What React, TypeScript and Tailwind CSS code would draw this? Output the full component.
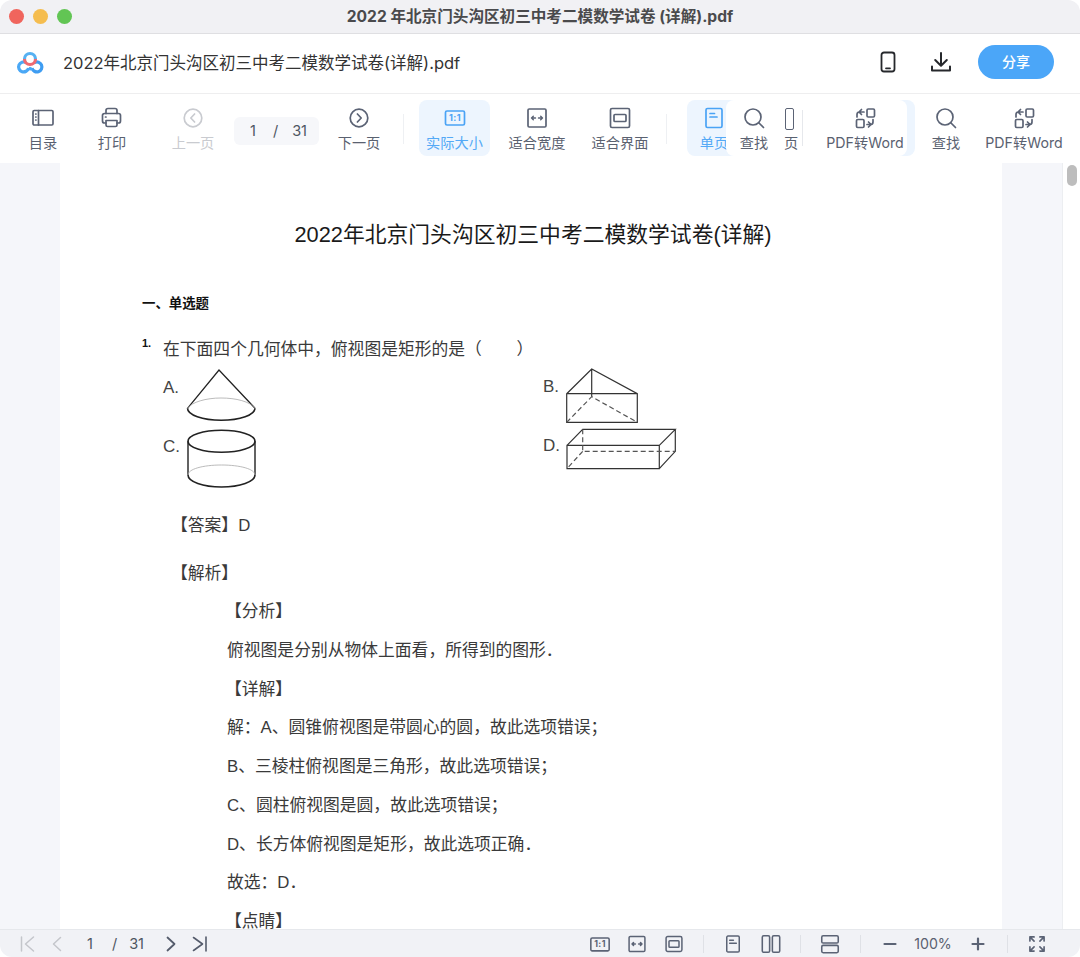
import React from "react";

const FONT = "font-['Inter','Noto_Sans_CJK_SC',sans-serif]";
const PDF = "font-['Liberation_Sans','Noto_Sans_CJK_SC',sans-serif]";

type IconProps = { c?: string };
const Svg = ({ c = "#5b6375", w = 1.7, children }: IconProps & { w?: number; children: React.ReactNode }) => (
  <svg width={24} height={24} viewBox="0 0 24 24" fill="none" stroke={c} strokeWidth={w} strokeLinecap="round" strokeLinejoin="round">
    {children}
  </svg>
);

const Toc = (p: IconProps) => (
  <Svg {...p}>
    <rect x="2" y="4.5" width="20" height="14.5" rx="1.2" />
    <path d="M7.5 4.5v14.500M4.700 8h.3M4.700 11h.3M4.700 14h.3" />
  </Svg>
);
const Printer = (p: IconProps) => (
  <Svg {...p}>
    <path d="M6 7.500V4.500a2 2 0 0 1 2-2h7a2 2 0 0 1 2 2v3" />
    <path d="M6 17H4.500A2 2 0 0 1 2.500 15V9.500a2 2 0 0 1 2-2h14a2 2 0 0 1 2 2V15a2 2 0 0 1-2 2H17" />
    <path d="M6 14.500h11V19a1.500 1.500 0 0 1-1.500 1.500h-8A1.500 1.500 0 0 1 6 19zM5.500 11h.5" />
  </Svg>
);
const CircleArrow = ({ left, ...p }: IconProps & { left?: boolean }) => (
  <Svg {...p}>
    <circle cx="12" cy="12" r="8.800" />
    <path d={left ? "M13.600 8l-3.800 4 3.800 4" : "M10.400 8l3.800 4-3.800 4"} />
  </Svg>
);
const Actual = ({ c = "#5b6375" }: IconProps) => (
  <svg width={24} height={24} viewBox="0 0 24 24" fill="none" stroke={c} strokeWidth="1.700">
    <rect x="2.500" y="5" width="19" height="14" rx="1.500" />
    <text x="12" y="15.400" textAnchor="middle" fontSize="9" fontWeight="700" letterSpacing="0.4" fill={c} stroke="none" fontFamily="Inter, sans-serif">1:1</text>
  </svg>
);
const FitWidth = (p: IconProps) => (
  <Svg {...p}>
    <rect x="3" y="3" width="18" height="18" rx="1.200" />
    <path d="M6.500 12h4M6.500 12l1.800-1.700M6.500 12l1.800 1.700M17.500 12h-4M17.500 12l-1.800-1.700M17.500 12l-1.800 1.700" strokeWidth="1.400" />
  </Svg>
);
const FitPage = (p: IconProps) => (
  <Svg {...p}>
    <rect x="2.500" y="2.500" width="19" height="19" rx="1.500" />
    <rect x="6" y="8.500" width="12" height="7" rx="1" />
  </Svg>
);
const SinglePage = (p: IconProps) => (
  <Svg {...p}>
    <rect x="4" y="2.500" width="16" height="19" rx="1.500" />
    <path d="M8 7.500h4.500M8 11h7" />
  </Svg>
);
const Search = (p: IconProps) => (
  <Svg {...p}>
    <circle cx="11" cy="11" r="8" />
    <path d="M17 17l4.500 4.500" />
  </Svg>
);
const Convert = (p: IconProps) => (
  <Svg {...p}>
    <rect x="14" y="3" width="7.500" height="8" rx="1.200" />
    <rect x="3.500" y="13.500" width="7.500" height="8" rx="1.200" />
    <path d="M11 6H6.500A2.500 2.500 0 0 0 4 8.500V11M8.500 3.500 6 6l2.500 2.500M14 18.500h3.500A2.500 2.500 0 0 0 20 16v-2.500M15.500 21l2.500-2.500-2.500-2.500" />
  </Svg>
);
const Phone = () => (
  <svg width="24" height="24" viewBox="0 0 24 24" fill="none" stroke="#26282c" strokeWidth="1.800" strokeLinecap="round">
    <rect x="5.500" y="2.500" width="13" height="19" rx="2.500" />
    <path d="M10 18.300h4" />
  </svg>
);
const Download = () => (
  <svg width="24" height="24" viewBox="0 0 24 24" fill="none" stroke="#26282c" strokeWidth="2" strokeLinecap="round" strokeLinejoin="round">
    <path d="M12 3v12.500M6.200 10l5.800 5.800 5.800-5.800M3 16.500v4h18v-4" />
  </svg>
);
const Logo = () => (
  <svg className="mb-[2px]" width="30" height="24" viewBox="0 0 30 24" fill="none" strokeWidth="3.200">
    <path d="M11 11.500a5 5 0 1 0 2.500 5.500" stroke="#4aa8f6" />
    <path d="M17 17a5 5 0 1 0 2.500-5.500" stroke="#3f9df2" />
    <path d="M13.500 17c1 1 2.500 1 3.500 0" stroke="#4aa8f6" />
    <path d="M9.500 8a5.500 5.500 0 0 1 11 0" stroke="#56b1f2" />
    <path d="M9.500 8a5.500 5.500 0 0 0 11 0" stroke="#ee6a72" />
  </svg>
);

const Tool = ({ label, icon, w, color = "text-[#5a6170]", ml = "" }: { label: string; icon: React.ReactNode; w: string; color?: string; ml?: string }) => (
  <div className={`flex h-[56px] shrink-0 flex-col items-center pt-[6px] ${w} ${ml}`}>
    <div className="flex h-[24px] items-center justify-center">{icon}</div>
    <span className="block h-[18px]">
      <span className={`whitespace-nowrap text-[14.200px] leading-[18px] ${color}`}>{label}</span>
    </span>
  </div>
);

const ToolDivider = ({ ml }: { ml: string }) => <div className={`mt-[14px] h-[30px] w-px shrink-0 bg-[#eef0f3] ${ml}`} />;

const Toolbar = () => (
  <div className="relative z-10 flex h-[69px] shrink-0 items-start bg-white pl-[8px] pt-[6px]">
    <Tool label="目录" icon={<Toc />} w="w-[70px]" />
    <Tool label="打印" icon={<Printer />} w="w-[68px]" />
    <Tool label="上一页" icon={<CircleArrow left c="#c9cbd0" />} w="w-[70px]" color="text-[#c9cbd0]" ml="ml-[12px]" />
    <div className="ml-[6px] mt-[17px] flex h-[28px] w-[85px] shrink-0 items-center rounded-md bg-[#f6f7fa] pl-[16px] text-[14.500px] text-[#4e5561]">
      <span>1</span>
      <span className="ml-[17px]">/</span>
      <span className="ml-[14px]">31</span>
    </div>
    <Tool label="下一页" icon={<CircleArrow />} w="w-[70px]" ml="ml-[5px]" />
    <ToolDivider ml="ml-[9px]" />
    <div className="ml-[15px] shrink-0 rounded-lg bg-[#edf5fe]">
      <Tool label="实际大小" icon={<Actual c="#4aa3f5" />} w="w-[71px]" color="text-[#54a9f6]" />
    </div>
    <Tool label="适合宽度" icon={<FitWidth />} w="w-[84px]" ml="ml-[5px]" />
    <Tool label="适合界面" icon={<FitPage />} w="w-[82px]" />
    <ToolDivider ml="ml-[5px]" />
    <div className="relative ml-[20px] h-[56px] w-[228px] shrink-0 rounded-lg bg-[#edf5fe]">
      <Tool label="单页" icon={<SinglePage c="#4aa3f5" />} w="w-[54px]" color="text-[#54a9f6]" />
      <div className="absolute left-[39px] top-0 flex h-[56px] w-[181px] items-center overflow-hidden rounded-lg bg-white">
        <Tool label="查找" icon={<Search />} w="w-[56px]" />
        <div className="relative h-[56px] w-[20px] shrink-0 overflow-hidden">
          <span className="absolute left-[2px] top-[34px] whitespace-nowrap text-[14.200px] leading-[18px] text-[#5a6170]">页</span>
          <div className="absolute left-[3px] top-[8px] h-[22px] w-[9px] rounded-[2px] border-[1.600px] border-[#5b6375]" />
        </div>
        <div className="h-[36px] w-px shrink-0 bg-[#e6e8ec]" />
        <Tool label="PDF转Word" icon={<Convert />} w="w-[90px]" ml="ml-[17px]" />
      </div>
    </div>
    <Tool label="查找" icon={<Search />} w="w-[60px]" ml="ml-[1px]" />
    <Tool label="PDF转Word" icon={<Convert />} w="w-[90px]" ml="ml-[3px]" />
  </div>
);

const Cone = () => (
  <svg width="72" height="56" viewBox="0 0 72 56" fill="none" stroke="#222" strokeWidth="1.300">
    <path d="M1.500 40.300 33 2 69 40.300" />
    <path d="M1.500 40.300c0 6.700 15 12 33.750 12S69 47 69 40.300" strokeWidth="1.600" />
    <path d="M1.500 40.300C6 34 20 30 35 30s29 3.500 34 10.300" stroke="#aaa" strokeWidth="0.800" />
  </svg>
);
const Cylinder = () => (
  <svg width="72" height="60" viewBox="0 0 72 60" fill="none" stroke="#222" strokeWidth="1.400">
    <ellipse cx="34.500" cy="12.300" rx="33.500" ry="11" strokeWidth="1.600" />
    <path d="M1 12.300V46M68 12.300V46" />
    <path d="M1 46c0 6.700 15 12 33.500 12S68 52.700 68 46" strokeWidth="1.600" />
    <path d="M1 46c0-6 15-10 33.500-10S68 40 68 46" stroke="#aaa" strokeWidth="0.800" />
  </svg>
);
const Prism = () => (
  <svg width="76" height="58" viewBox="0 0 76 58" fill="none" stroke="#333" strokeWidth="1.200">
    <path d="M1.700 25.700 26.700 1 72.300 25.700v28.600H1.700zM1.700 25.700h70.600M26.700 1v27.700" />
    <path d="M1.700 54.300 26.700 28.700 72.300 54.300" strokeDasharray="5 3" stroke="#555" />
  </svg>
);
const Box = () => (
  <svg width="112" height="44" viewBox="0 0 112 44" fill="none" stroke="#333" strokeWidth="1.200">
    <path d="M1 17.300h92.300v23.400H1zM1 17.300 16.700 1.300h92.600L93.300 17.300M109.300 1.300v22L93.300 40.700" />
    <path d="M16.700 1.300v22H109.300M16.700 23.300 1 40.700" strokeDasharray="5 3" stroke="#555" />
  </svg>
);

const BottomIcon = ({ children, w }: { children: React.ReactNode; w: string }) => (
  <div className={`flex shrink-0 items-center justify-center ${w}`}>{children}</div>
);
const BarDivider = ({ ml }: { ml: string }) => <div className={`h-[18px] w-px shrink-0 bg-[#dfe1e6] ${ml}`} />;

const Bottom = () => (
  <div className="flex h-[28px] shrink-0 items-center border-t border-[#e6e8ec] bg-[#f1f2f6] text-[14.500px] text-[#4e5561]">
    <BottomIcon w="w-[20px] ml-[18px]">
      <svg width="20" height="20" viewBox="0 0 20 20" fill="none" stroke="#c4c6cb" strokeWidth="1.500" strokeLinecap="round" strokeLinejoin="round"><path d="M3.500 3v14M15.500 3l-8 7 8 7" /></svg>
    </BottomIcon>
    <BottomIcon w="w-[20px] ml-[9px]">
      <svg width="20" height="20" viewBox="0 0 20 20" fill="none" stroke="#c4c6cb" strokeWidth="1.500" strokeLinecap="round" strokeLinejoin="round"><path d="M13.500 3.500 6.500 10l7 6.500" /></svg>
    </BottomIcon>
    <span className="ml-[20px]">1</span>
    <span className="ml-[19px]">/</span>
    <span className="ml-[12px]">31</span>
    <BottomIcon w="w-[20px] ml-[17px]">
      <svg width="20" height="20" viewBox="0 0 20 20" fill="none" stroke="#555c6c" strokeWidth="1.800" strokeLinecap="round" strokeLinejoin="round"><path d="M6.500 3.500l7 6.500-7 6.500" /></svg>
    </BottomIcon>
    <BottomIcon w="w-[20px] ml-[9px]">
      <svg width="20" height="20" viewBox="0 0 20 20" fill="none" stroke="#555c6c" strokeWidth="1.600" strokeLinecap="round" strokeLinejoin="round"><path d="M3.500 3.500l9 6.500-9 6.500M16 3v14" /></svg>
    </BottomIcon>
    <div className="ml-auto flex items-center">
      <BottomIcon w="w-[24px]"><svg width="22" height="22" viewBox="0 0 24 24" fill="none" stroke="#5b6375" strokeWidth="1.700"><rect x="2" y="5.500" width="20" height="14" rx="1.500" /><text x="12" y="15.800" textAnchor="middle" fontSize="9.500" fontWeight="700" letterSpacing="0.4" fill="#5b6375" stroke="none" fontFamily="Inter, sans-serif">1:1</text></svg></BottomIcon>
      <BottomIcon w="w-[22px] ml-[14px]"><svg width="20" height="20" viewBox="0 0 24 24" fill="none" stroke="#5b6375" strokeWidth="1.800" strokeLinecap="round"><rect x="2.500" y="3" width="19" height="18" rx="1.500" /><path d="M6 12h4M14 12h4M6 12l1.800-1.700M6 12l1.800 1.700M18 12l-1.800-1.700M18 12l-1.800 1.700" /></svg></BottomIcon>
      <BottomIcon w="w-[22px] ml-[15px]"><svg width="20" height="20" viewBox="0 0 24 24" fill="none" stroke="#5b6375" strokeWidth="1.800"><rect x="2.500" y="3" width="19" height="18" rx="2" /><rect x="6" y="8" width="12" height="8" rx="1" /></svg></BottomIcon>
      <BarDivider ml="ml-[18px]" />
      <BottomIcon w="w-[20px] ml-[19px]"><svg width="20" height="20" viewBox="0 0 24 24" fill="none" stroke="#5b6375" strokeWidth="1.800" strokeLinecap="round"><rect x="4.500" y="2.500" width="15" height="19" rx="1.500" /><path d="M8 7.500h4.500M8 11h8" /></svg></BottomIcon>
      <BottomIcon w="w-[22px] ml-[17px]"><svg width="22" height="22" viewBox="0 0 24 24" fill="none" stroke="#5b6375" strokeWidth="1.700"><rect x="2.500" y="3" width="8" height="18" rx="1.500" /><rect x="13.500" y="3" width="8" height="18" rx="1.500" /></svg></BottomIcon>
      <BarDivider ml="ml-[18px]" />
      <BottomIcon w="w-[22px] ml-[18px]"><svg width="22" height="22" viewBox="0 0 24 24" fill="none" stroke="#5b6375" strokeWidth="1.700"><rect x="3" y="3" width="18" height="8" rx="1.500" /><rect x="3" y="13.500" width="18" height="8" rx="1.500" /></svg></BottomIcon>
      <BarDivider ml="ml-[19px]" />
      <BottomIcon w="w-[18px] ml-[20px]"><svg width="16" height="16" viewBox="0 0 16 16" stroke="#5b6375" strokeWidth="2.200" strokeLinecap="round"><path d="M2.500 8h11" /></svg></BottomIcon>
      <span className="ml-[15px] w-[38px] text-center text-[14.200px] text-[#5a6170]">100%</span>
      <BottomIcon w="w-[18px] ml-[17px]"><svg width="16" height="16" viewBox="0 0 16 16" stroke="#5b6375" strokeWidth="2.200" strokeLinecap="round"><path d="M2.500 8h11M8 2.500v11" /></svg></BottomIcon>
      <BarDivider ml="ml-[20px]" />
      <BottomIcon w="w-[20px] ml-[19px] mr-[33px]"><svg width="20" height="20" viewBox="0 0 24 24" fill="none" stroke="#5b6375" strokeWidth="2" strokeLinecap="round" strokeLinejoin="round"><path d="M3.500 8.500v-5h5M3.500 3.500l5 5M20.500 8.500v-5h-5M20.500 3.500l-5 5M3.500 15.500v5h5M3.500 20.500l5-5M20.500 15.500v5h-5M20.500 20.500l-5-5" /></svg></BottomIcon>
    </div>
  </div>
);

const lines = [
  { t: "【分析】", b: true },
  { t: "俯视图是分别从物体上面看，所得到的图形．" },
  { t: "【详解】", b: true },
  { t: "解：A、圆锥俯视图是带圆心的圆，故此选项错误；" },
  { t: "B、三棱柱俯视图是三角形，故此选项错误；" },
  { t: "C、圆柱俯视图是圆，故此选项错误；" },
  { t: "D、长方体俯视图是矩形，故此选项正确．" },
  { t: "故选：D．" },
  { t: "【点睛】", b: true },
];

const Page = () => (
  <div className={`h-full w-[942px] shrink-0 overflow-hidden bg-white pl-[82px] text-[#3a3a3a] ${PDF}`}>
    <h1 className="mt-[56px] w-[782px] text-center text-[21.800px] font-normal leading-[32px] text-[#1a1a1a]">2022年北京门头沟区初三中考二模数学试卷(详解)</h1>
    <p className="mt-[44px] text-[13.400px] font-bold leading-[18px] text-[#111]">一、单选题</p>
    <div className="mt-[24px] flex items-start">
      <span className="mt-[-3px] w-[21px] text-[11px] font-bold leading-[18px] text-[#111]">1.</span>
      <span className="whitespace-pre text-[16.800px] leading-[26px]">
        {"在下面四个几何体中，俯视图是矩形的是（       "}
        <span className="ml-[2px]">）</span>
      </span>
    </div>
    <div className="ml-[21px] mt-[5px] grid w-[540px] grid-cols-[380px_160px] text-[17px] leading-[20px] text-[#444]">
      <div className="flex h-[60px]"><span className="mt-[10px] w-[23px]">A.</span><Cone /></div>
      <div className="flex h-[60px]"><span className="mt-[9px] w-[22px]">B.</span><Prism /></div>
      <div className="flex h-[60px]"><span className="mt-[9px] w-[24px]">C.</span><div className="mt-px"><Cylinder /></div></div>
      <div className="flex h-[60px]"><span className="mt-[8px] w-[23px]">D.</span><Box /></div>
    </div>
    <p className="ml-[29px] mt-[25px] text-[16.800px] leading-[26px]">【答案】D</p>
    <p className="ml-[29px] mt-[22px] text-[16.800px] leading-[26px]">【解析】</p>
    <div className="ml-[85px] mt-[12px] flex flex-col gap-[12.750px]">
      {lines.map(({ t, b }) => (
        <p key={t} className={`whitespace-nowrap text-[16.800px] leading-[26px] ${b ? "ml-[-2px]" : ""}`}>{t}</p>
      ))}
    </div>
  </div>
);

export default function App() {
  return (
    <div className={`flex h-[957px] w-[1080px] flex-col overflow-hidden rounded-xl bg-white ${FONT}`}>
      <div className="relative flex h-[34px] shrink-0 items-center justify-center border-b border-[#dfdfe2] bg-[#f1f1f4]">
        <div className="absolute left-[9px] top-[9px] flex gap-[9px]">
          <span className="h-[15px] w-[15px] rounded-full bg-[#f0655d]" />
          <span className="h-[15px] w-[15px] rounded-full bg-[#f5bd4f]" />
          <span className="h-[15px] w-[15px] rounded-full bg-[#62c554]" />
        </div>
        <span className="pt-px text-[15.600px] font-bold text-[#4a4a4c]">2022 年北京门头沟区初三中考二模数学试卷 (详解).pdf</span>
      </div>
      <div className="flex h-[60px] shrink-0 items-center border-b border-[#eeeeef] bg-white pl-[15px]">
        <Logo />
        <span className="ml-[18px] text-[16.500px] text-[#333]">2022年北京门头沟区初三中考二模数学试卷(详解).pdf</span>
        <div className="ml-auto flex items-center pb-[4px] pr-[26px]">
          <Phone />
          <div className="ml-[29px]"><Download /></div>
          <button className="ml-[25px] h-[34px] w-[76px] rounded-full bg-[#4ba6f8] text-[14px] font-medium text-white">分享</button>
        </div>
      </div>
      <Toolbar />
      <div className="flex min-h-0 flex-1 bg-[#f5f6fa]">
        <div className="w-[60px] shrink-0" />
        <Page />
        <div className="w-[60px] shrink-0" />
        <div className="flex w-[18px] shrink-0 justify-center border-l border-[#eceef1] bg-white pt-[2px]">
          <div className="h-[21px] w-[10px] rounded-full bg-[#bdbdbd]" />
        </div>
      </div>
      <Bottom />
    </div>
  );
}
